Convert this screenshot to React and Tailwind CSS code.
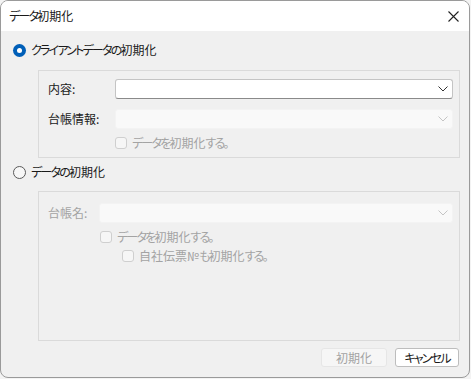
const jp = "font-['Noto_Sans_CJK_JP','Noto_Sans',sans-serif] [font-feature-settings:'palt'] text-[12px] leading-none";

// kana runs are set tighter, like the narrow UI font in the dialog
const T = ({ children }) =>
    children.split(/([\u3040-\u30ff]+)/).map((part, i) =>
        /[\u3040-\u30ff]/.test(part) ? (
            <span key={i} className="tracking-[-1.8px]">{part}</span>
        ) : (
            <span key={i}>{part}</span>
        )
    );

const Chevron = ({ disabled }) => (
    <svg width="10" height="6" viewBox="0 0 10 6" className="mr-[4px]">
        <path d="M0.5 0.5 L5 5 L9.5 0.5" fill="none" stroke={disabled ? '#c4c4c4' : '#333'} strokeWidth="1" />
    </svg>
);

const Select = ({ width, disabled }) => (
    <div
        className={`h-[20px] flex items-center justify-end rounded-[3px] border ${disabled ? 'bg-[#f9f9f9] border-[#f3f3f3]' : 'bg-white border-[#c4c4c4] border-b-[#8a8a8a]'
            }`}
        style={{ width }}
    >
        <Chevron disabled={disabled} />
    </div>
);

const Checkbox = ({ label, className = '' }) => (
    <div className={`flex items-center gap-[5px] ${className}`}>
        <div className="w-[12px] h-[12px] rounded-[3px] border border-[#cfcfcf] bg-[#f6f6f6]" />
        <span className="text-[#a3a3a3]"><T>{label}</T></span>
    </div>
);

const Radio = ({ checked, label }) => (
    <div className="h-[20px] flex items-center gap-[5px] pl-[12px]">
        {checked ? (
            <div className="w-[13px] h-[13px] rounded-full bg-[#005fb8] flex items-center justify-center">
                <div className="w-[5px] h-[5px] rounded-full bg-white" />
            </div>
        ) : (
            <div className="w-[13px] h-[13px] rounded-full border border-[#5a5a5a] bg-[#f7f7f7]" />
        )}
        <span className="text-[#1a1a1a]"><T>{label}</T></span>
    </div>
);

export default function App() {
    return (
        <div className={`w-[471px] h-[379px] bg-[#f3f3f3] ${jp}`}>
            <div className="w-[470px] h-[378px] border border-[#9a9a9a] rounded-[8px] overflow-hidden flex flex-col bg-[#f0f0f0]">
                {/* title bar */}
                <div className="h-[30px] shrink-0 bg-white flex items-center justify-between pl-[8px] pr-[10px]">
                    <span className="text-[#1a1a1a]"><T>データ初期化</T></span>
                    <svg width="11" height="11" viewBox="0 0 11 11">
                        <path d="M0.5 0.5 L10.5 10.5 M10.5 0.5 L0.5 10.5" stroke="#222" strokeWidth="1.1" />
                    </svg>
                </div>

                <div className="flex-1 flex flex-col">
                    <div className="mt-[9px]">
                        <Radio checked label="クライアントデータの初期化" />
                    </div>

                    <div className="ml-[37px] mt-[10px] w-[422px] h-[88px] border border-[#dadada] pt-[8px] pl-[9px]">
                        <div className="grid grid-cols-[67px_338px] items-center gap-y-[10px]">
                            <span className="text-[#1a1a1a]">内容:</span>
                            <Select width={338} />
                            <span className="text-[#1a1a1a]">台帳情報:</span>
                            <Select width={338} disabled />
                        </div>
                        <Checkbox label="データを初期化する。" className="ml-[67px] mt-[8px]" />
                    </div>

                    <div className="mt-[4px]">
                        <Radio label="データの初期化" />
                    </div>

                    <div className="ml-[37px] mt-[9px] w-[422px] h-[150px] border border-[#dadada] pt-[11px] pl-[9px]">
                        <div className="flex items-center">
                            <span className="w-[51px] text-[#a3a3a3]">台帳名:</span>
                            <Select width={354} disabled />
                        </div>
                        <Checkbox label="データを初期化する。" className="ml-[52px] mt-[8px]" />
                        <Checkbox label="自社伝票№も初期化する。" className="ml-[74px] mt-[7px]" />
                    </div>

                    <div className="flex justify-end gap-[8px] mt-[7px] mr-[10px]">
                        <div className="w-[66px] h-[19px] rounded-[3px] border border-[#e6e6e6] bg-[#f6f6f6] flex items-center justify-center text-[#a3a3a3]">
                            初期化
                        </div>
                        <div className="w-[64px] h-[19px] rounded-[3px] border border-[#bdbdbd] bg-white flex items-center justify-center text-[#1a1a1a]">
                            <T>キャンセル</T>
                        </div>
                    </div>
                </div>
            </div>
        </div>
    );
}
